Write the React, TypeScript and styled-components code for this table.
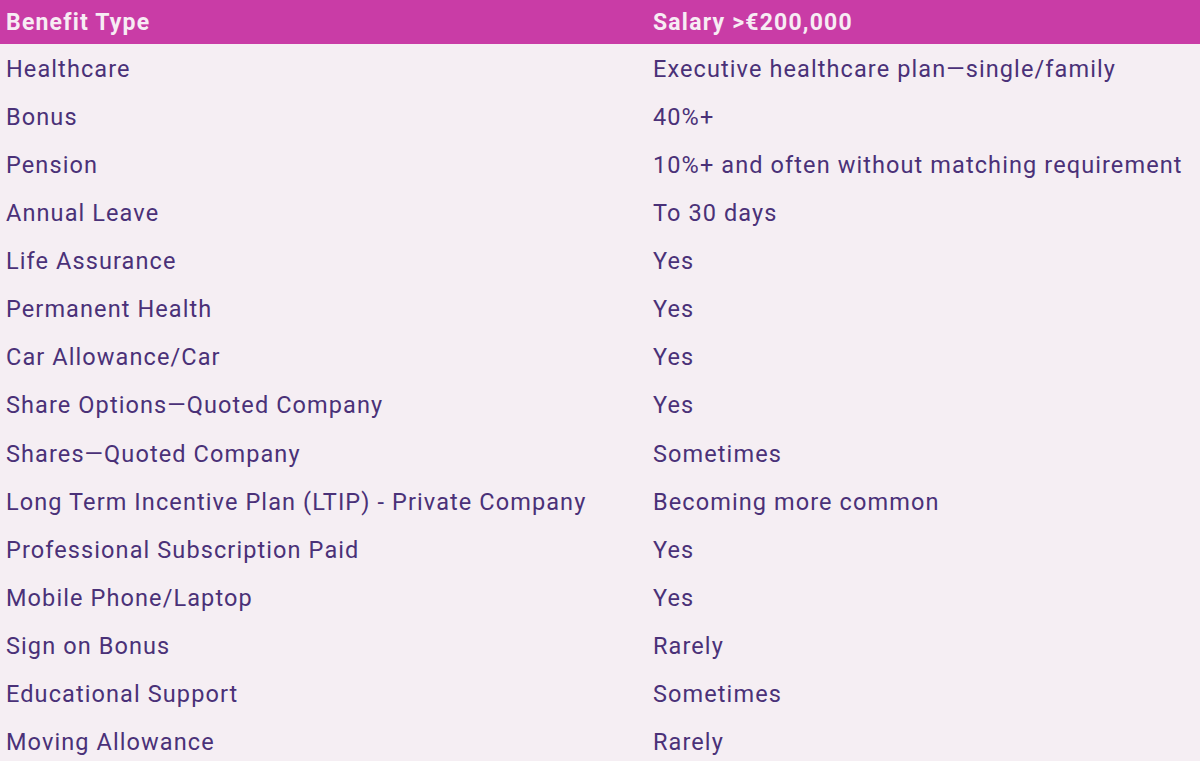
import React from "react";
import styled, { createGlobalStyle } from "styled-components";

const Global = createGlobalStyle`
  html, body { margin: 0; padding: 0; background: #f5eef3; }
  body { font-family: Roboto, "Noto Sans", sans-serif; }
`;

const Table = styled.div`
  display: grid;
  grid-template-columns: 647px 1fr;
  width: 1200px;
  background: #f5eef3;
`;

const HeadCell = styled.div`
  background: #c93ca6;
  color: #f7ecf4;
  font-weight: 700;
  font-size: 23px;
  height: 44px;
  display: flex;
  align-items: center;
  padding-left: 6px;
  letter-spacing: 1.2px;
`;

const Cell = styled.div`
  color: #4a3178;
  font-size: 23.5px;
  height: 48.07px;
  display: flex;
  align-items: center;
  padding-left: 6px;
  padding-top: 2px;
  box-sizing: border-box;
  letter-spacing: 1.1px;
  white-space: nowrap;
`;

const rows: [string, string][] = [
  ["Healthcare", "Executive healthcare plan\u2014single/family"],
  ["Bonus", "40%+"],
  ["Pension", "10%+ and often without matching requirement"],
  ["Annual Leave", "To 30 days"],
  ["Life Assurance", "Yes"],
  ["Permanent Health", "Yes"],
  ["Car Allowance/Car", "Yes"],
  ["Share Options\u2014Quoted Company", "Yes"],
  ["Shares\u2014Quoted Company", "Sometimes"],
  ["Long Term Incentive Plan (LTIP) - Private Company", "Becoming more common"],
  ["Professional Subscription Paid", "Yes"],
  ["Mobile Phone/Laptop", "Yes"],
  ["Sign on Bonus", "Rarely"],
  ["Educational Support", "Sometimes"],
  ["Moving Allowance", "Rarely"],
];

export default function App() {
  return (
    <>
      <Global />
      <Table>
        <HeadCell>Benefit Type</HeadCell>
        <HeadCell>Salary &gt;€200,000</HeadCell>
        {rows.map(([a, b]) => (
          <React.Fragment key={a}>
            <Cell>{a}</Cell>
            <Cell>{b}</Cell>
          </React.Fragment>
        ))}
      </Table>
    </>
  );
}
